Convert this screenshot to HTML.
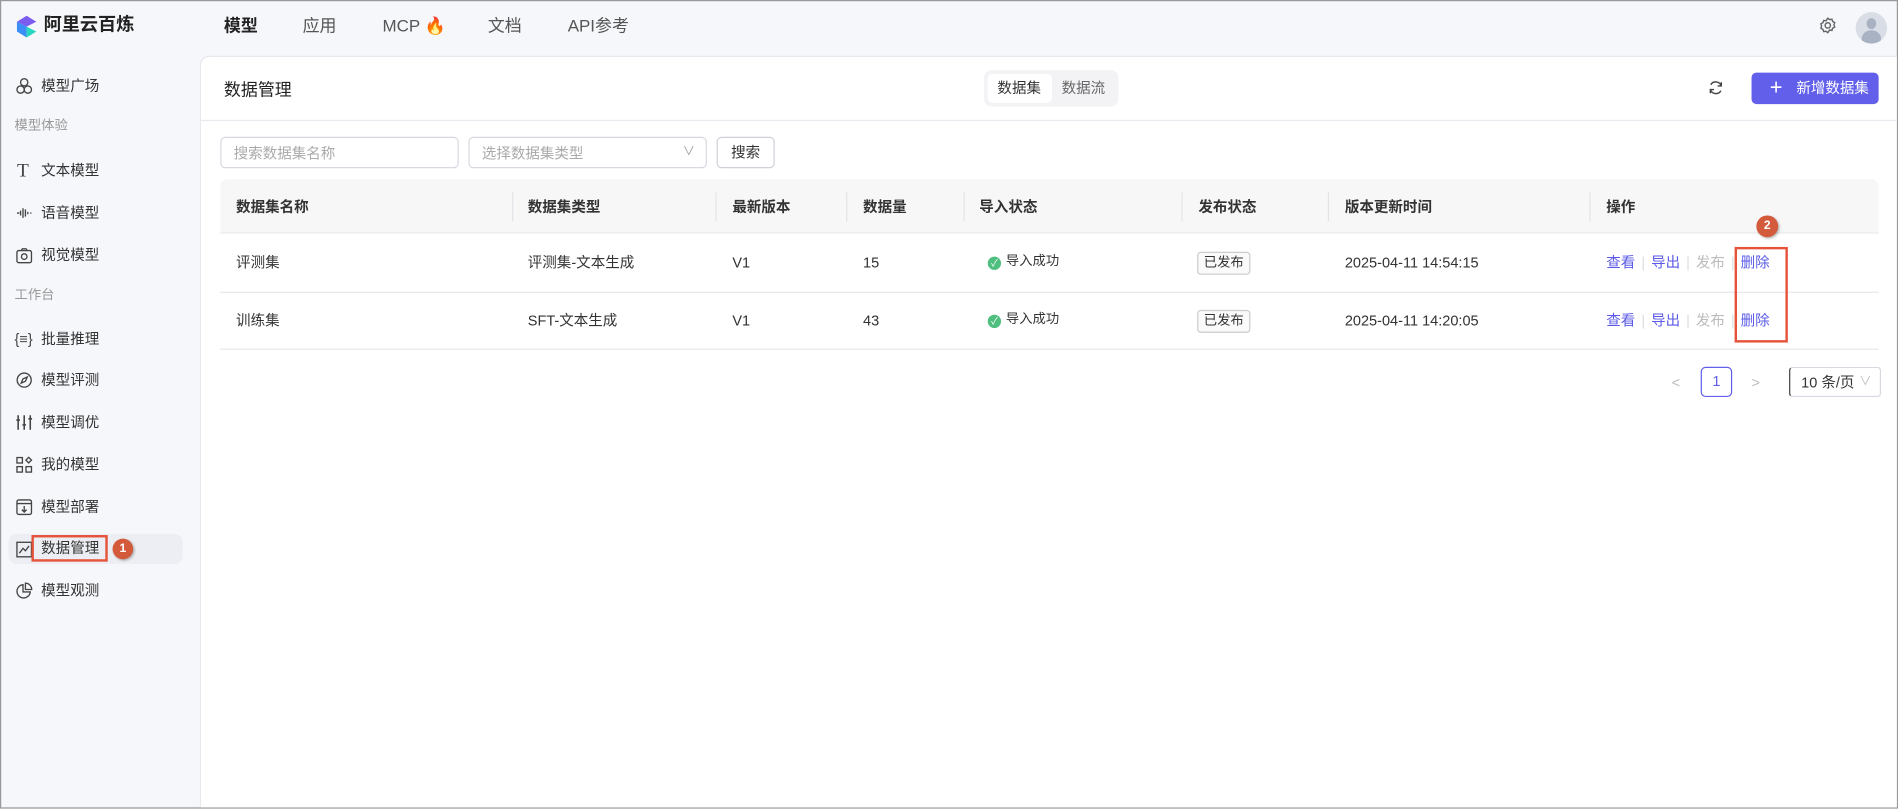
<!DOCTYPE html>
<html><head><meta charset="utf-8"><style>
*{box-sizing:border-box;margin:0;padding:0}
html,body{width:1898px;height:808px;overflow:hidden;background:#f6f7fb}
body{font-family:"Liberation Sans","Noto Sans CJK SC",sans-serif;color:#333}
#w{position:absolute;left:0;top:0;width:1568px;height:668px;transform:scale(1.21046);transform-origin:0 0;background:#f6f7fb;border:1px solid #999;overflow:hidden}
.a{position:absolute;white-space:nowrap;line-height:1.2}
.nav{font-size:14px;color:#555;top:12px}
.side{font-size:12px;color:#333;left:33px}
.si{position:absolute;left:12px;width:14px;height:14px}
.lbl{font-size:11px;color:#999;left:11px}
.th{font-size:12px;font-weight:bold;color:#333;top:163px}
.td{font-size:12px;color:#333}
.sep{position:absolute;top:158px;width:1px;height:24px;background:#e4e4e8}
.lnk{color:#5a5ae6}
.bar{color:#ddd}
</style></head><body><div id="w">
<!-- header -->
<svg class="a" style="left:11px;top:11px" width="20" height="20" viewBox="0 0 20 20"><path d="M10 1 L18 6 L10 10 L2 6Z" fill="#7b5cf0"/><path d="M2 6 L10 10 L10 19 L2 14Z" fill="#3a8ef6"/><path d="M10 10 L18 14 L10 19Z" fill="#27d6c0"/></svg>
<div class="a" style="left:35px;top:11px;font-size:15px;font-weight:bold;color:#222">阿里云百炼</div>
<div class="a nav" style="left:184px;color:#222;font-weight:bold">模型</div>
<div class="a nav" style="left:249px">应用</div>
<div class="a nav" style="left:315px">MCP <span style="color:#f58a1f">&#x1F525;</span></div>
<div class="a nav" style="left:402px">文档</div>
<div class="a nav" style="left:468px">API参考</div>
<svg class="a" style="left:1502px;top:13px" width="14" height="14" viewBox="0 0 14 14" fill="none" stroke="#666" stroke-width="1.2"><circle cx="7" cy="7" r="2.2"/><path d="M7 1l1.5 1.2 1.9-.3.6 1.8 1.7 1-.6 1.8.6 1.8-1.7 1-.6 1.8-1.9-.3L7 13l-1.5-1.2-1.9.3-.6-1.8-1.7-1 .6-1.8-.6-1.8 1.7-1 .6-1.8 1.9.3z"/></svg>
<div class="a" style="left:1532px;top:9px;width:26px;height:26px;border-radius:50%;background:#d8dde6;overflow:hidden"><div style="position:absolute;left:9px;top:5px;width:8px;height:9px;border-radius:50%;background:#a9b2c3"></div><div style="position:absolute;left:5px;top:15px;width:16px;height:14px;border-radius:50%;background:#a9b2c3"></div></div>
<!-- sidebar -->
<div class="a side" style="top:63px">模型广场</div>
<svg class="si" style="top:63px" viewBox="0 0 14 14" fill="none" stroke="#444" stroke-width="1.1"><circle cx="7" cy="4" r="3"/><circle cx="4" cy="10" r="3"/><circle cx="10" cy="10" r="3"/></svg>
<div class="a lbl" style="top:97px">模型体验</div>
<div class="a side" style="top:133px">文本模型</div>
<div class="a" style="left:13px;top:131px;font-size:16px;color:#444;font-family:'Liberation Serif',serif">T</div>
<div class="a side" style="top:168px">语音模型</div>
<svg class="si" style="top:168px" viewBox="0 0 14 14" stroke="#444" stroke-width="1.1"><path d="M1 7h2M4 5v4M6 3v8M8 4v6M10 6v2M12 7h1"/></svg>
<div class="a side" style="top:203px">视觉模型</div>
<svg class="si" style="top:203px" viewBox="0 0 14 14" fill="none" stroke="#444" stroke-width="1.1"><rect x="1" y="3" width="12" height="10" rx="1.5"/><circle cx="7" cy="8" r="2.3"/><path d="M4.5 3l1-1.5h3l1 1.5"/></svg>
<div class="a lbl" style="top:237px">工作台</div>
<div class="a side" style="top:272px">批量推理</div>
<div class="a" style="left:11px;top:272px;font-size:12px;color:#444">{≡}</div>
<div class="a side" style="top:306px">模型评测</div>
<svg class="si" style="top:306px" viewBox="0 0 14 14" fill="none" stroke="#444" stroke-width="1.1"><circle cx="7" cy="7" r="5.8"/><path d="M9.5 4.5L8 8 4.5 9.5 6 6z"/></svg>
<div class="a side" style="top:341px">模型调优</div>
<svg class="si" style="top:341px" viewBox="0 0 14 14" stroke="#444" stroke-width="1.3"><path d="M2 1v12M7 1v12M12 1v12M0.5 5h3M5.5 9h3M10.5 4h3"/></svg>
<div class="a side" style="top:376px">我的模型</div>
<svg class="si" style="top:376px" viewBox="0 0 14 14" fill="none" stroke="#444" stroke-width="1.1"><rect x="1" y="1" width="4.5" height="4.5"/><rect x="1" y="8.5" width="4.5" height="4.5"/><rect x="8.5" y="8.5" width="4.5" height="4.5"/><path d="M10.7 0.8l2.3 2.3-2.3 2.3-2.3-2.3z"/></svg>
<div class="a side" style="top:411px">模型部署</div>
<svg class="si" style="top:411px" viewBox="0 0 14 14" fill="none" stroke="#444" stroke-width="1.1"><rect x="1" y="1" width="12" height="12" rx="1.5"/><path d="M1 4h12M7 6v5M5 9l2 2 2-2"/></svg>
<div class="a" style="left:6px;top:440px;width:144px;height:25px;border-radius:7px;background:#eceef3"></div>
<svg class="si" style="top:446px" viewBox="0 0 14 14" fill="none" stroke="#444" stroke-width="1.1"><rect x="1" y="1" width="12" height="12"/><path d="M3 10l3-4 2 2 3-4"/></svg>
<div class="a side" style="top:445px">数据管理</div>
<div class="a" style="left:25px;top:441px;width:63px;height:22px;border:2px solid #e5533a"></div>
<div class="a" style="left:92px;top:444px;width:17px;height:17px;border-radius:50%;background:#d45a3c;color:#fff;font-size:10px;font-weight:bold;text-align:center;line-height:17px;box-shadow:1px 1px 2px rgba(0,0,0,.3)">1</div>
<div class="a side" style="top:480px">模型观测</div>
<svg class="si" style="top:480px" viewBox="0 0 14 14" fill="none" stroke="#444" stroke-width="1.1"><path d="M6 2a5.5 5.5 0 1 0 6 6H6z"/><path d="M8 0.8v5.2h5.2A5.2 5.2 0 0 0 8 0.8z"/></svg>
<!-- main -->
<div class="a" style="left:164px;top:45px;width:1403px;height:622px;background:#fff;border-left:1px solid #e6e7ee;border-top:1px solid #e6e7ee;border-top-left-radius:8px"></div>
<div class="a" style="left:184px;top:65px;font-size:14px;color:#222">数据管理</div>
<div class="a" style="left:812px;top:57px;width:111px;height:30px;background:#f3f3f5;border-radius:6px"></div>
<div class="a" style="left:815px;top:60px;width:53px;height:24px;background:#fff;border-radius:4px"></div>
<div class="a" style="left:823px;top:65px;font-size:12px;color:#333">数据集</div>
<div class="a" style="left:876px;top:65px;font-size:12px;color:#666">数据流</div>
<svg class="a" style="left:1410px;top:65px" width="13" height="13" viewBox="0 0 13 13" fill="none" stroke="#444" stroke-width="1.2"><path d="M11 5A4.8 4.8 0 0 0 2.3 4M2 8a4.8 4.8 0 0 0 8.7 1"/><path d="M11 2v3H8M2 11V8h3"/></svg>
<div class="a" style="left:1446px;top:59px;width:105px;height:26px;background:#6260ea;border-radius:4px;color:#fff;font-size:12px"><span style="position:absolute;left:15px;top:2px;font-size:18px;line-height:20px">+</span><span style="position:absolute;left:37px;top:6px">新增数据集</span></div>
<div class="a" style="left:164px;top:98px;width:1404px;height:1px;background:#e8e8ee"></div>
<div class="a" style="left:181px;top:112px;width:197px;height:26px;border:1px solid #d8d8e0;border-radius:4px;font-size:12px;color:#aaa;padding:6px 10px">搜索数据集名称</div>
<div class="a" style="left:386px;top:112px;width:197px;height:26px;border:1px solid #d8d8e0;border-radius:4px;font-size:12px;color:#aaa;padding:6px 10px">选择数据集类型<span style="position:absolute;right:9px;top:6px;color:#999;font-size:10px">&#x2228;</span></div>
<div class="a" style="left:591px;top:112px;width:48px;height:26px;border:1px solid #d0d0d8;border-radius:4px;font-size:12px;color:#333;text-align:center;line-height:24px">搜索</div>
<div class="a" style="left:181px;top:147px;width:1370px;height:45px;background:#f7f7f8;border-radius:6px 6px 0 0;border-bottom:1px solid #e8e8ec"></div>
<div class="sep" style="left:422px"></div><div class="sep" style="left:590px"></div><div class="sep" style="left:698px"></div><div class="sep" style="left:795px"></div><div class="sep" style="left:975px"></div><div class="sep" style="left:1096px"></div><div class="sep" style="left:1312px"></div>
<div class="a th" style="left:194px">数据集名称</div><div class="a th" style="left:435px">数据集类型</div><div class="a th" style="left:604px">最新版本</div><div class="a th" style="left:712px">数据量</div><div class="a th" style="left:808px">导入状态</div><div class="a th" style="left:989px">发布状态</div><div class="a th" style="left:1110px">版本更新时间</div><div class="a th" style="left:1326px">操作</div>
<div class="a" style="left:181px;top:240px;width:1370px;height:1px;background:#e8e8ec"></div>
<div class="a" style="left:181px;top:287px;width:1370px;height:1px;background:#e8e8ec"></div>
<!-- row1 -->
<div class="a td" style="left:194px;top:209px">评测集</div><div class="a td" style="left:435px;top:209px">评测集-文本生成</div><div class="a td" style="left:604px;top:209px">V1</div><div class="a td" style="left:712px;top:209px">15</div>
<div class="a td" style="left:815px;top:209px;font-size:11px"><span style="display:inline-block;width:11px;height:11px;border-radius:50%;background:#4fbf7f;color:#fff;font-size:8px;text-align:center;line-height:11px;vertical-align:-1px;margin-right:4px">✓</span>导入成功</div>
<div class="a" style="left:988px;top:207px;width:44px;height:19px;border:1px solid #ccc;border-radius:3px;font-size:11px;text-align:center;line-height:17px;background:#fafafa">已发布</div>
<div class="a td" style="left:1110px;top:209px">2025-04-11 14:54:15</div>
<div class="a td lnk" style="left:1326px;top:209px">查看</div><div class="a td bar" style="left:1355px;top:209px">|</div>
<div class="a td lnk" style="left:1363px;top:209px">导出</div><div class="a td bar" style="left:1392px;top:209px">|</div>
<div class="a td" style="left:1400px;top:209px;color:#bbb">发布</div><div class="a td bar" style="left:1429px;top:209px">|</div>
<div class="a td lnk" style="left:1437px;top:209px">删除</div>
<!-- row2 -->
<div class="a td" style="left:194px;top:257px">训练集</div><div class="a td" style="left:435px;top:257px">SFT-文本生成</div><div class="a td" style="left:604px;top:257px">V1</div><div class="a td" style="left:712px;top:257px">43</div>
<div class="a td" style="left:815px;top:257px;font-size:11px"><span style="display:inline-block;width:11px;height:11px;border-radius:50%;background:#4fbf7f;color:#fff;font-size:8px;text-align:center;line-height:11px;vertical-align:-1px;margin-right:4px">✓</span>导入成功</div>
<div class="a" style="left:988px;top:255px;width:44px;height:19px;border:1px solid #ccc;border-radius:3px;font-size:11px;text-align:center;line-height:17px;background:#fafafa">已发布</div>
<div class="a td" style="left:1110px;top:257px">2025-04-11 14:20:05</div>
<div class="a td lnk" style="left:1326px;top:257px">查看</div><div class="a td bar" style="left:1355px;top:257px">|</div>
<div class="a td lnk" style="left:1363px;top:257px">导出</div><div class="a td bar" style="left:1392px;top:257px">|</div>
<div class="a td" style="left:1400px;top:257px;color:#bbb">发布</div><div class="a td bar" style="left:1429px;top:257px">|</div>
<div class="a td lnk" style="left:1437px;top:257px">删除</div>
<!-- annotation 2 -->
<div class="a" style="left:1432px;top:203px;width:44px;height:79px;border:2px solid #e5533a"></div>
<div class="a" style="left:1450px;top:177px;width:18px;height:18px;border-radius:50%;background:#d45a3c;color:#fff;font-size:10px;font-weight:bold;text-align:center;line-height:18px;box-shadow:1px 1px 2px rgba(0,0,0,.3)">2</div>
<!-- pagination -->
<div class="a" style="left:1380px;top:308px;color:#bbb;font-size:12px">&lt;</div>
<div class="a" style="left:1404px;top:302px;width:26px;height:25px;border:1px solid #6260ea;border-radius:4px;color:#6260ea;font-size:12px;text-align:center;line-height:23px">1</div>
<div class="a" style="left:1446px;top:308px;color:#bbb;font-size:12px">&gt;</div>
<div class="a" style="left:1477px;top:302px;width:76px;height:25px;border:1px solid #d8d8e0;border-left:1px solid #333;border-radius:3px;font-size:12px;color:#333;padding:5px 9px">10 条/页<span style="position:absolute;right:7px;top:6px;color:#bbb;font-size:10px">&#x2228;</span></div>
</div></body></html>
